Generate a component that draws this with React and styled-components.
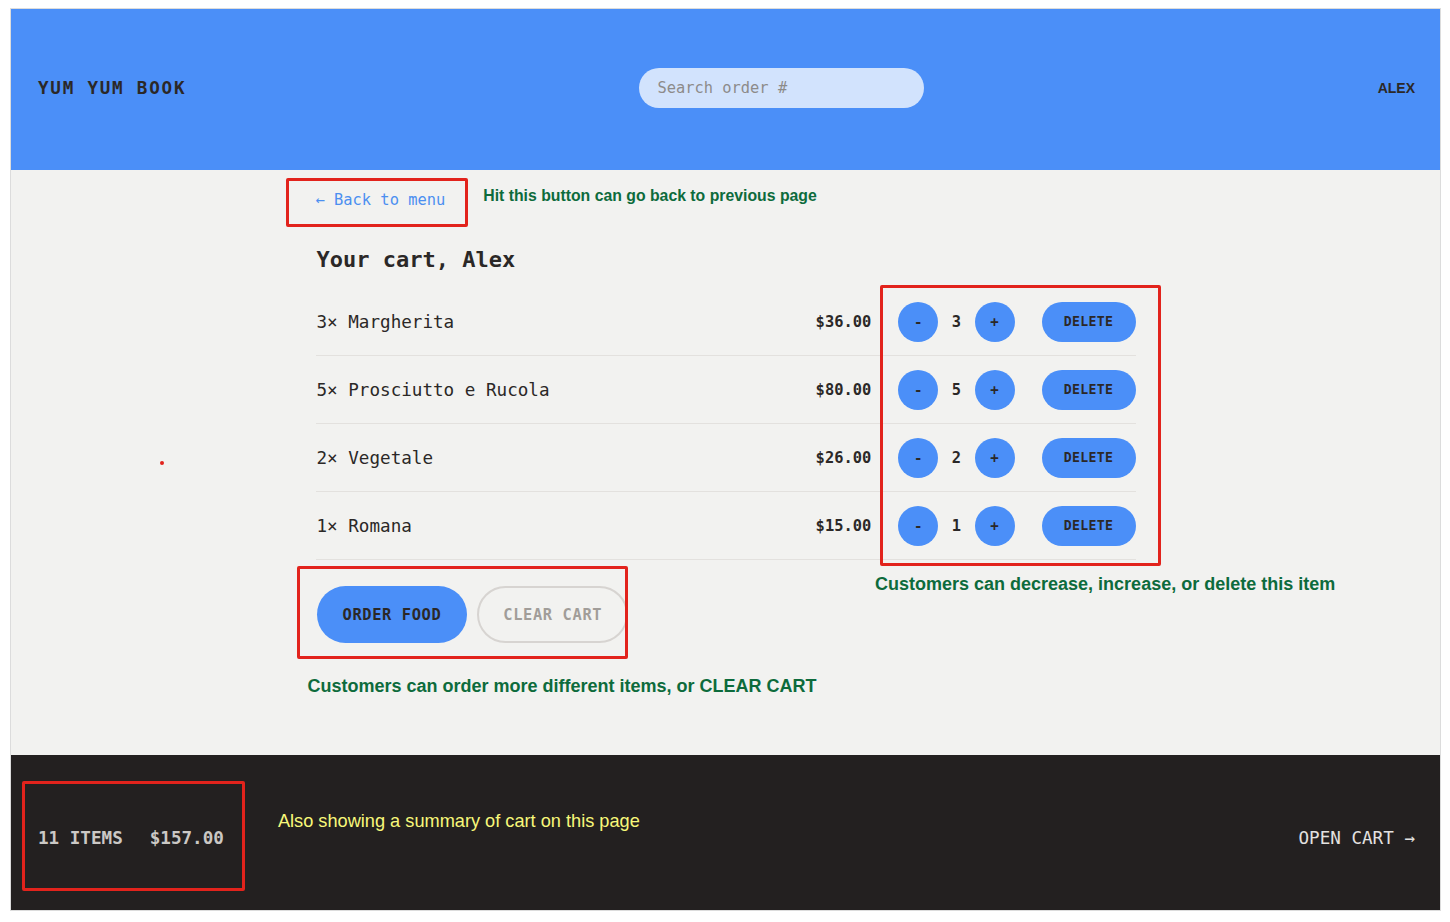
import React from "react";
import styled, { createGlobalStyle } from "styled-components";

const GlobalStyle = createGlobalStyle`
  * { box-sizing: border-box; }
  body {
    margin: 0;
    background: #ffffff;
    font-family: "DejaVu Sans Mono", "Liberation Mono", monospace;
    color: #2b2827;
  }
`;

const cart = [
  { qty: 3, name: "Margherita", price: "$36.00" },
  { qty: 5, name: "Prosciutto e Rucola", price: "$80.00" },
  { qty: 2, name: "Vegetale", price: "$26.00" },
  { qty: 1, name: "Romana", price: "$15.00" },
];

function App() {
  return (
    <>
      <GlobalStyle />
      <Frame>
        <Header>
          <Logo>YUM YUM BOOK</Logo>
          <Search placeholder="Search order #" />
          <User>ALEX</User>
        </Header>

        <Main>
          <Container>
            <BackRow>
              <BackLink href="#">← Back to menu</BackLink>
              <Note $size={15.8}>Hit this button can go back to previous page</Note>
            </BackRow>

            <Title>Your cart, Alex</Title>

            <List>
              {cart.map((item) => (
                <Row key={item.name}>
                  <Name>
                    {item.qty}× {item.name}
                  </Name>
                  <Right>
                    <Price>{item.price}</Price>
                    <Quantity>
                      <RoundButton>-</RoundButton>
                      <Qty>{item.qty}</Qty>
                      <RoundButton>+</RoundButton>
                    </Quantity>
                    <DeleteButton>DELETE</DeleteButton>
                  </Right>
                </Row>
              ))}
            </List>

            <Actions>
              <PrimaryButton>ORDER FOOD</PrimaryButton>
              <SecondaryButton>CLEAR CART</SecondaryButton>
            </Actions>

            <BottomNote>Customers can order more different items, or CLEAR CART</BottomNote>
          </Container>
        </Main>

        <Footer>
          <FooterLeft>
            <Summary>
              <span>11 ITEMS</span>
              <span>$157.00</span>
            </Summary>
            <YellowNote>Also showing a summary of cart on this page</YellowNote>
          </FooterLeft>
          <OpenCart href="#">OPEN CART →</OpenCart>
        </Footer>

        <RedBox $left={275} $top={169} $width={182} $height={49} />
        <RedBox $left={869} $top={276} $width={281} $height={281} />
        <RedBox $left={286} $top={557} $width={331} $height={93} />
        <RedBox $left={11} $top={772} $width={223} $height={110} />
        <RedDot />
        <SideNote>Customers can decrease, increase, or delete this item</SideNote>
      </Frame>
    </>
  );
}

export default App;

const Frame = styled.div`
  position: relative;
  margin: 8px 0 0 10px;
  width: 1431px;
  height: 903px;
  border: 1px solid #dcdcdc;
  display: flex;
  flex-direction: column;
  overflow: hidden;
`;

const Header = styled.header`
  height: 161px;
  background: #4b8ff8;
  display: flex;
  align-items: center;
  justify-content: space-between;
  padding: 0 25px 4px 27px;
`;

const Logo = styled.div`
  font-size: 17.6px;
  font-weight: 700;
  letter-spacing: 0.1em;
  color: #2b2827;
`;

const Search = styled.input`
  width: 285px;
  height: 40px;
  border: none;
  border-radius: 9999px;
  background: #d2e3fd;
  padding: 0 18px;
  font-family: "DejaVu Sans Mono", monospace;
  font-size: 15.4px;
  outline: none;
  &::placeholder {
    color: #8d8b8a;
  }
`;

const User = styled.div`
  font-family: "Liberation Sans", Arial, sans-serif;
  font-weight: 700;
  font-size: 14px;
  color: #2b2827;
`;

const Main = styled.main`
  flex: 1;
  background: #f2f2f0;
`;

const Container = styled.div`
  width: 820px;
  margin: 0 auto;
  padding-top: 17px;
`;

const BackRow = styled.div`
  display: flex;
  align-items: center;
`;

const BackLink = styled.a`
  font-size: 15.4px;
  line-height: 20px;
  color: #4b8ff0;
  text-decoration: none;
`;

const Note = styled.div`
  margin-left: 38px;
  margin-bottom: 8px;
  font-family: "Liberation Sans", Arial, sans-serif;
  font-weight: 700;
  font-size: ${(p) => p.$size}px;
  color: #0d6b3c;
`;

const Title = styled.h2`
  margin: 32px 0 0 1px;
  font-size: 22px;
  line-height: 30px;
  font-weight: 700;
`;

const List = styled.ul`
  list-style: none;
  margin: 13px 0 0;
  padding: 0;
`;

const Row = styled.li`
  display: flex;
  align-items: center;
  justify-content: space-between;
  padding: 13.5px 0;
  border-bottom: 1px solid #e3e1de;
`;

const Name = styled.p`
  margin: 0 0 0 1px;
  font-size: 17.6px;
`;

const Right = styled.div`
  display: flex;
  align-items: center;
  gap: 27px;
`;

const Price = styled.p`
  margin: 0;
  font-size: 15.4px;
  font-weight: 700;
`;

const Quantity = styled.div`
  display: flex;
  align-items: center;
  gap: 13.5px;
`;

const Qty = styled.span`
  font-size: 15.4px;
  font-weight: 600;
`;

const RoundButton = styled.button`
  width: 40px;
  height: 40px;
  border: none;
  border-radius: 50%;
  background: #4b8ff8;
  font-family: "DejaVu Sans Mono", monospace;
  font-size: 14px;
  font-weight: 700;
  color: #2b2827;
  padding: 0;
`;

const DeleteButton = styled.button`
  width: 94px;
  height: 40px;
  border: none;
  border-radius: 9999px;
  background: #4b8ff8;
  font-family: "DejaVu Sans Mono", monospace;
  font-size: 13.2px;
  font-weight: 700;
  letter-spacing: 0.025em;
  color: #2b2827;
  padding: 0;
`;

const Actions = styled.div`
  display: flex;
  gap: 10px;
  margin-top: 26px;
  margin-left: 1px;
`;

const PrimaryButton = styled.button`
  height: 57px;
  padding: 0 26px;
  border: none;
  border-radius: 9999px;
  background: #4b8ff8;
  font-family: "DejaVu Sans Mono", monospace;
  font-size: 15.4px;
  font-weight: 700;
  letter-spacing: 0.04em;
  color: #2b2827;
`;

const SecondaryButton = styled.button`
  height: 57px;
  padding: 0 24px;
  border: 2px solid #d7d4d1;
  border-radius: 9999px;
  background: transparent;
  font-family: "DejaVu Sans Mono", monospace;
  font-size: 15.4px;
  font-weight: 600;
  letter-spacing: 0.04em;
  color: #a19d99;
`;

const BottomNote = styled.p`
  margin: 33px 0 0 -8px;
  font-family: "Liberation Sans", Arial, sans-serif;
  font-weight: 700;
  font-size: 18px;
  line-height: 20px;
  color: #0d6b3c;
`;

const Footer = styled.footer`
  height: 155px;
  background: #232020;
  display: flex;
  align-items: center;
  justify-content: space-between;
  padding: 10px 25px 0 27px;
`;

const FooterLeft = styled.div`
  display: flex;
  align-items: center;
`;

const Summary = styled.p`
  margin: 0;
  display: flex;
  gap: 27px;
  font-size: 17.6px;
  font-weight: 600;
  color: #cbc8c5;
`;

const YellowNote = styled.p`
  margin: 0 0 32px 54px;
  font-family: "Liberation Sans", Arial, sans-serif;
  font-size: 18.2px;
  color: #f8f87a;
`;

const OpenCart = styled.a`
  font-size: 17.6px;
  color: #e4e2e0;
  text-decoration: none;
`;

const RedBox = styled.div`
  position: absolute;
  left: ${(p) => p.$left}px;
  top: ${(p) => p.$top}px;
  width: ${(p) => p.$width}px;
  height: ${(p) => p.$height}px;
  border: 3px solid #e2231c;
  border-radius: 2px;
  pointer-events: none;
`;

const RedDot = styled.div`
  position: absolute;
  left: 149px;
  top: 452px;
  width: 4px;
  height: 4px;
  border-radius: 50%;
  background: #e2231c;
`;

const SideNote = styled.div`
  position: absolute;
  left: 864px;
  top: 565px;
  font-family: "Liberation Sans", Arial, sans-serif;
  font-weight: 700;
  font-size: 18px;
  line-height: 20px;
  color: #0d6b3c;
`;
